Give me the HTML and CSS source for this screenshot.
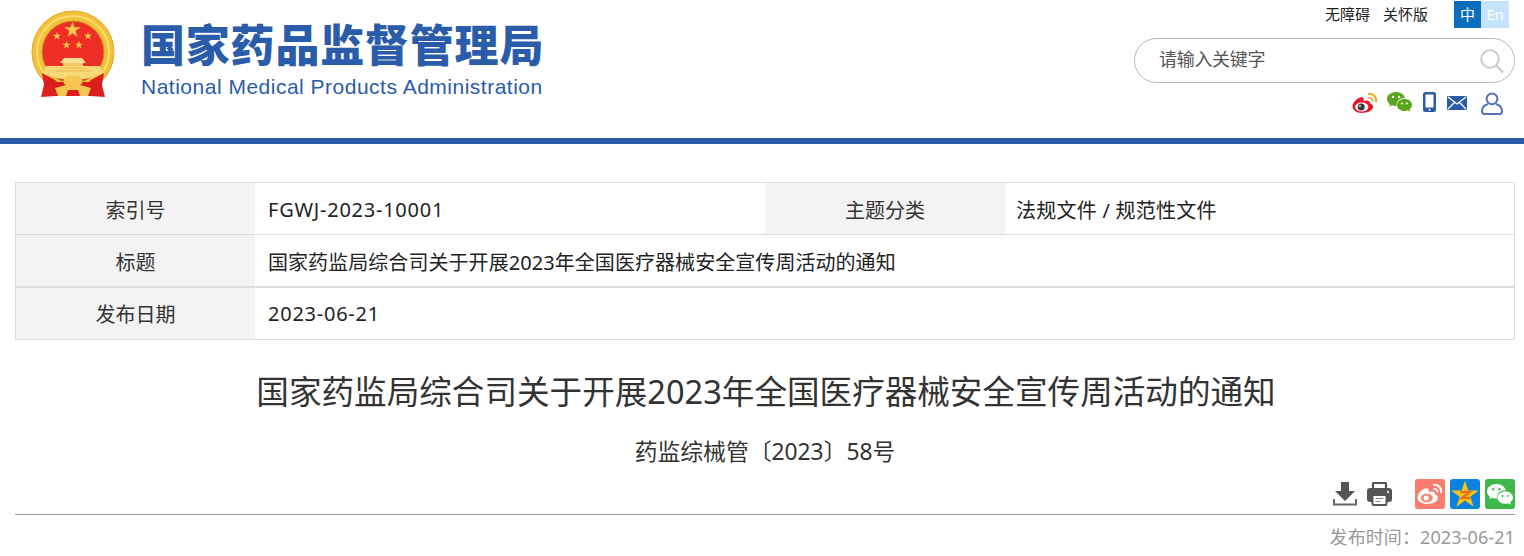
FILE: index.html
```html
<!DOCTYPE html>
<html lang="zh-CN">
<head>
<meta charset="UTF-8">
<meta name="viewport" content="width=device-width, initial-scale=1.0">
<title>国家药品监督管理局</title>
<link rel="stylesheet" href="styles.css">
</head>
<body>
<svg class="defs" width="0" height="0" aria-hidden="true">
  <defs>
    <polygon id="star" points="0,-1 .224,-.309 .951,-.309 .363,.118 .588,.809 0,.382 -.588,.809 -.363,.118 -.951,-.309 -.224,-.309"/>
  </defs>
</svg>

<header class="header">
  <div class="brand">
    <svg class="emblem" viewBox="30 8 86 92" width="86" height="92">
      <circle cx="73" cy="52" r="41" fill="#f3c03a" stroke="#e3a92b" stroke-width="1"/>
      <circle cx="73" cy="52" r="36" fill="none" stroke="#f9dc70" stroke-width="2"/>
      <circle cx="73" cy="52" r="31" fill="#ee2e24" stroke="#c9962a" stroke-width="1"/>
      <use href="#star" transform="translate(72.500 30) scale(8.500)" fill="#f5c84a"/>
      <use href="#star" transform="translate(57 36) scale(4.300)" fill="#f5c84a"/>
      <use href="#star" transform="translate(88 36) scale(4.300)" fill="#f5c84a"/>
      <use href="#star" transform="translate(66.500 45) scale(4.300)" fill="#f5c84a"/>
      <use href="#star" transform="translate(79 45) scale(4.300)" fill="#f5c84a"/>
      <path d="M64 58 H82 L86 63 H60 Z" fill="#f9dd90"/>
      <rect x="63" y="63" width="20" height="3" fill="#f5c767"/>
      <path d="M46 66 H100 L103 73 Q90 80 73 80 Q56 80 43 73 Z" fill="#f8d877"/>
      <path d="M60 68 H86 M55 71 H91" stroke="#eeb94e" stroke-width="1"/>
      <path d="M56 82 H90 V96 H56 Z" fill="#dc1f1c"/>
      <path d="M42 73 L55 80 L62 87 L56 96 L41 97 L44 85 Z" fill="#dc1f1c"/>
      <path d="M104 73 L91 80 L84 87 L90 96 L105 97 L102 85 Z" fill="#dc1f1c"/>
      <path d="M64 79 Q68 74 73 76 Q78 74 82 79 Q84 83 80 85 L91 88 L88 96 H80 L78 90 H68 L66 96 H58 L55 88 L66 85 Q62 83 64 79 Z" fill="#f4c64f"/>
    </svg>
    <div class="brand-text">
      <div class="brand-cn">国家药品监督管理局</div>
      <div class="brand-en">National Medical Products Administration</div>
    </div>
  </div>

  <div class="tools">
    <div class="top-links">
      <a class="top-link">无障碍</a>
      <a class="top-link">关怀版</a>
      <div class="lang">
        <span class="lang-cn">中</span><span class="lang-en">En</span>
      </div>
    </div>
    <div class="search">
      <span class="search-text">请输入关键字</span>
      <svg class="search-icon" viewBox="0 0 24 25" width="24" height="25">
        <circle cx="10" cy="10" r="8.800" fill="none" stroke="#c9c9c9" stroke-width="1.800"/>
        <path d="M16.500 16.500 L23 23.500" stroke="#c9c9c9" stroke-width="2.400" fill="none"/>
      </svg>
    </div>
    <div class="social">
      <svg class="weibo" viewBox="0 0 26 22" width="26" height="22">
        <path d="M10 21 C4 21 .5 18 .5 14.500 C.5 11 4 7 8 5.500 C11 4.500 12.500 6 11.500 9 C15 7.800 18.500 8.300 18 11.200 C20 12 21 13.200 21 15 C21 18 16 21 10 21 Z" fill="#e6162d"/>
        <ellipse cx="9.800" cy="15" rx="6.600" ry="4.600" fill="#fff"/>
        <circle cx="9.200" cy="15" r="3.500" fill="#3a3a3a"/>
        <circle cx="8" cy="14" r="1" fill="#ddd"/>
        <path d="M16 2 C20 1 25 4 24 10" stroke="#f5a623" stroke-width="2" fill="none"/>
        <path d="M16.500 6 C19 5.500 21 7.500 20.500 9.500" stroke="#f5a623" stroke-width="1.800" fill="none"/>
      </svg>
      <svg class="wechat" viewBox="0 0 25 20" width="25" height="20">
        <path d="M9 0 C4 0 0 3.200 0 7 C0 9.200 1.200 11 3 12.300 L2.300 14.500 L5 13.200 C6.500 13.800 8 14 9.500 14 C9 9 13 5.800 18 6 C17.200 2.500 13.500 0 9 0 Z" fill="#5aa61c"/>
        <path d="M17.500 7 C13.300 7 10 9.600 10 13 C10 16.400 13.300 19 17.500 19 C18.600 19 19.600 18.800 20.500 18.500 L23 19.800 L22.400 17.500 C24 16.300 25 14.800 25 13 C25 9.600 21.700 7 17.500 7 Z" fill="#5aa61c"/>
        <circle cx="6" cy="5" r="1.200" fill="#fff"/>
        <circle cx="12" cy="5" r="1.200" fill="#fff"/>
        <circle cx="15" cy="11.500" r="1" fill="#fff"/>
        <circle cx="20" cy="11.500" r="1" fill="#fff"/>
      </svg>
      <svg class="phone" viewBox="0 0 13 20" width="13" height="20">
        <rect x="0" y="0" width="13" height="20" rx="2.500" fill="#2a5caa"/>
        <rect x="2.500" y="2.500" width="8" height="13" fill="#fff"/>
        <circle cx="6.500" cy="17.800" r="1" fill="#fff"/>
      </svg>
      <svg class="mail" viewBox="0 0 20 14" width="20" height="14">
        <rect width="20" height="14" rx="1" fill="#2a5caa"/>
        <path d="M1 1 L10 8 L19 1 M1 13 L7.500 6.500 M19 13 L12.500 6.500" stroke="#fff" stroke-width="1.300" fill="none"/>
      </svg>
      <svg class="user" viewBox="0 0 22 23" width="22" height="23">
        <circle cx="11" cy="6.800" r="5.400" fill="none" stroke="#4f73bd" stroke-width="2"/>
        <path d="M7 12 C3.500 13 1 15.500 1 19 C1 21 2 22 3.500 22 H18.500 C20 22 21 21 21 19 C21 15.500 18.500 13 15 12" fill="none" stroke="#4f73bd" stroke-width="2"/>
      </svg>
    </div>
  </div>
</header>

<main class="main">
  <div class="info">
    <div class="info-row">
      <div class="info-label">索引号</div>
      <div class="info-value info-half info-latin">FGWJ-2023-10001</div>
      <div class="info-label">主题分类</div>
      <div class="info-value info-topic">法规文件 / 规范性文件</div>
    </div>
    <div class="info-row thick">
      <div class="info-label">标题</div>
      <div class="info-value info-long">国家药监局综合司关于开展2023年全国医疗器械安全宣传周活动的通知</div>
    </div>
    <div class="info-row last">
      <div class="info-label">发布日期</div>
      <div class="info-value info-latin">2023-06-21</div>
    </div>
  </div>

  <h1 class="title">国家药监局综合司关于开展2023年全国医疗器械安全宣传周活动的通知</h1>
  <div class="doc-no">药监综械管〔2023〕58号</div>

  <div class="actions">
    <svg class="download" viewBox="0 0 24 24" width="24" height="24">
      <path d="M8 0 H16 V9 H22 L12 19 L2 9 H8 Z" fill="#555"/>
      <path d="M1 17 V22.500 H23 V17" fill="none" stroke="#666" stroke-width="2"/>
    </svg>
    <svg class="print" viewBox="0 0 25 24" width="25" height="24">
      <path d="M6 7 V1.500 Q6 1 7 1 H18 Q19 1 19 1.500 V7" fill="none" stroke="#555" stroke-width="2.200"/>
      <path d="M3 6 H22 Q25 6 25 9 V17 Q25 20 22 20 H3 Q0 20 0 17 V9 Q0 6 3 6 Z" fill="#555"/>
      <circle cx="21" cy="10" r="1.200" fill="#ddd"/>
      <rect x="5.500" y="13" width="14" height="10" rx="1" fill="#fff" stroke="#555" stroke-width="2"/>
      <path d="M8.500 16.500 H16.500 M8.500 19.500 H13.500" stroke="#888" stroke-width="1.200"/>
    </svg>
    <div class="share">
      <span class="tile tile-weibo">
        <svg viewBox="0 0 26 22" width="26" height="22">
          <path d="M10 21 C4 21 .5 18 .5 14.500 C.5 11 4 7 8 5.500 C11 4.500 12.500 6 11.500 9 C15 7.800 18.500 8.300 18 11.200 C20 12 21 13.200 21 15 C21 18 16 21 10 21 Z" fill="#fff"/>
          <ellipse cx="9.800" cy="15" rx="6" ry="4.200" fill="#fb7b6d"/>
          <circle cx="9.200" cy="15" r="2.600" fill="#fff"/>
          <path d="M16 2 C20 1 25 4 24 10" stroke="#fff" stroke-width="2" fill="none"/>
          <path d="M16.500 6 C19 5.500 21 7.500 20.500 9.500" stroke="#fff" stroke-width="1.800" fill="none"/>
        </svg>
      </span>
      <span class="tile tile-qzone">
        <svg viewBox="-15 -15 30 30" width="30" height="30">
          <use href="#star" transform="translate(0 1) scale(14.500)" fill="#f9c80e"/>
          <path d="M-5 -2 H5 L-3 4 H5" fill="none" stroke="#e8741a" stroke-width="2.400"/>
        </svg>
      </span>
      <span class="tile tile-wechat">
        <svg viewBox="0 0 25 20" width="26" height="21">
          <path d="M9 0 C4 0 0 3.200 0 7 C0 9.200 1.200 11 3 12.300 L2.300 14.500 L5 13.200 C6.500 13.800 8 14 9.500 14 C9 9 13 5.800 18 6 C17.200 2.500 13.500 0 9 0 Z" fill="#fff"/>
          <path d="M17.500 7 C13.300 7 10 9.600 10 13 C10 16.400 13.300 19 17.500 19 C18.600 19 19.600 18.800 20.500 18.500 L23 19.800 L22.400 17.500 C24 16.300 25 14.800 25 13 C25 9.600 21.700 7 17.500 7 Z" fill="#fff"/>
          <circle cx="6" cy="5" r="1.200" fill="#3cb94a"/>
          <circle cx="12" cy="5" r="1.200" fill="#3cb94a"/>
          <circle cx="15" cy="11.500" r="1" fill="#3cb94a"/>
          <circle cx="20" cy="11.500" r="1" fill="#3cb94a"/>
        </svg>
      </span>
    </div>
  </div>
  <div class="publish">发布时间：2023-06-21</div>
</main>
</body>
</html>
```

FILE: styles.css
```css
* {
  box-sizing: border-box;
}
body {
  margin: 0;
  background: #fff;
  color: #333;
  font-family: "Noto Sans", "Noto Sans CJK SC", sans-serif;
  overflow: hidden;
}
.defs {
  display: block;
  height: 0;
}

/* header */
.header {
  height: 144px;
  border-bottom: 6px solid #2a5caa;
  display: flex;
  justify-content: space-between;
  padding: 0 9px 0 30px;
}
.brand {
  display: flex;
  align-items: flex-start;
  padding-top: 8px;
}
.brand-text {
  margin-left: 25px;
  color: #2a5caa;
}
.brand-cn {
  margin-top: 7px;
  font-size: 44px;
  line-height: 56px;
  font-weight: 900;
  font-family: "Noto Sans CJK SC", sans-serif;
  letter-spacing: .8px;
  white-space: nowrap;
}
.brand-en {
  margin-top: 4px;
  font-family: "Liberation Sans", sans-serif;
  font-size: 21px;
  line-height: 24px;
  letter-spacing: .5px;
  white-space: nowrap;
}
.tools {
  width: 381px;
  display: flex;
  flex-direction: column;
}
.top-links {
  height: 38px;
  padding-top: 1px;
  display: flex;
  justify-content: flex-end;
  padding-right: 6px;
}
.top-link {
  font-size: 15px;
  line-height: 27px;
  margin-right: 13px;
  color: #222;
}
.lang {
  display: flex;
  margin-left: 13px;
  height: 27px;
  font-size: 15px;
  line-height: 27px;
  color: #fff;
  text-align: center;
}
.lang-cn {
  width: 27px;
  background: #0a6ebd;
}
.lang-en {
  width: 28px;
  background: #c5e3fd;
}
.search {
  height: 45px;
  border: 1px solid #b8b8b8;
  border-radius: 23px;
  display: flex;
  align-items: center;
  justify-content: space-between;
  padding: 0 10px 0 24px;
}
.search-text {
  font-size: 18px;
  line-height: 24px;
  letter-spacing: -.3px;
  margin-top: -4px;
  color: #555;
}
.search-icon {
  margin-top: 2px;
}
.social {
  display: flex;
  justify-content: flex-end;
  align-items: flex-start;
  margin-top: 9px;
  padding-right: 12px;
}
.weibo {
  margin-right: 9px;
}
.wechat {
  margin-right: 11px;
}
.phone {
  margin-right: 11px;
}
.mail {
  margin: 4px 14px 0 0;
}

/* content */
.main {
  padding: 38px 9px 0 15px;
}
.info {
  border: 1px solid #ddd;
  border-bottom: 0;
  font-size: 20px;
}
.info-row {
  display: flex;
  height: 52px;
  border-bottom: 1px solid #ddd;
}
.info-row.thick {
  height: 53px;
  border-bottom-width: 2px;
}
.info-label {
  width: 239px;
  flex: none;
  background: #f3f3f3;
  display: flex;
  align-items: center;
  justify-content: center;
  padding-top: 1px;
}
.info-value {
  flex: 1;
  display: flex;
  align-items: center;
  padding: 1px 0 0 13px;
  color: #222;
}
.info-row.last .info-label,
.info-row.last .info-value {
  padding-top: 0;
}
.info-latin {
  letter-spacing: .75px;
}
.info-long {
  letter-spacing: .06px;
}
.info-half {
  flex: none;
  width: 510px;
}
.info-half + .info-label {
  width: 240px;
}
.info-topic {
  padding-left: 11px;
  letter-spacing: .25px;
}
.title {
  margin: 27px 0 0;
  padding-left: 2px;
  text-align: center;
  font-size: 32.600px;
  line-height: 50px;
  font-weight: 400;
  white-space: nowrap;
}
.doc-no {
  margin-top: 19px;
  text-align: center;
  font-size: 22.800px;
  line-height: 32px;
}
.actions {
  margin-top: 11px;
  height: 36px;
  border-bottom: 1px solid #999;
  display: flex;
  justify-content: flex-end;
  align-items: flex-start;
}
.download {
  margin: 3px 10px 0 0;
}
.print {
  margin: 3px 23px 0 0;
}
.share {
  display: flex;
  gap: 5px;
}
.tile {
  width: 30px;
  height: 30px;
  border-radius: 3px;
  display: flex;
  align-items: center;
  justify-content: center;
}
.tile-weibo {
  background: #fb7b6d;
}
.tile-qzone {
  background: #0a83e0;
}
.tile-wechat {
  background: #3cb94a;
}
.publish {
  margin-top: 9px;
  text-align: right;
  font-size: 18px;
  line-height: 26px;
  letter-spacing: .1px;
  color: #999;
}
```
